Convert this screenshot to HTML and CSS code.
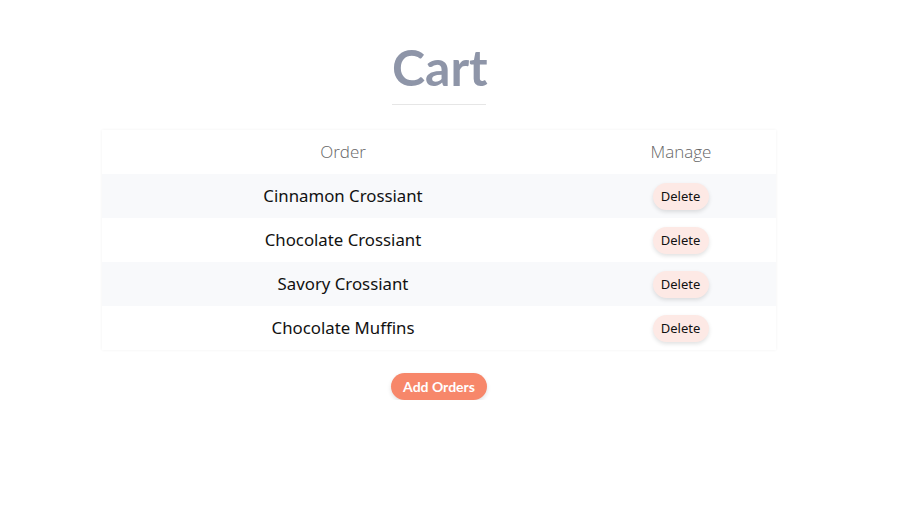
FILE: index.html
```html
<!DOCTYPE html>
<html>
<head>
<meta charset="utf-8">
<link rel="stylesheet" href="styles.css">
</head>
<body>
<main class="page">
  <h1 class="title">Cart</h1>
  <div class="card">
    <div class="row head">
      <div class="c-order">Order</div>
      <div class="c-manage">Manage</div>
    </div>
    <div class="row alt">
      <div class="c-order">Cinnamon Crossiant</div>
      <div class="c-manage"><button class="del">Delete</button></div>
    </div>
    <div class="row">
      <div class="c-order">Chocolate Crossiant</div>
      <div class="c-manage"><button class="del">Delete</button></div>
    </div>
    <div class="row alt">
      <div class="c-order">Savory Crossiant</div>
      <div class="c-manage"><button class="del">Delete</button></div>
    </div>
    <div class="row">
      <div class="c-order">Chocolate Muffins</div>
      <div class="c-manage"><button class="del">Delete</button></div>
    </div>
  </div>
  <button class="add">Add Orders</button>
</main>
</body>
</html>
```
FILE: styles.css
```css
* { box-sizing: border-box; }
html, body { margin: 0; padding: 0; background: #fff; }
body { font-family: "Noto Sans", "Open Sans", sans-serif; color: #111; }
.page {
  width: 878px;
  display: flex;
  flex-direction: column;
  align-items: center;
  padding-top: 36px;
}
.title {
  margin: 0;
  font-family: "Lato", "Noto Sans", sans-serif;
  font-weight: 700;
  font-size: 50px;
  line-height: 62px;
  color: #8e95a8;
  padding-bottom: 6px;
  border-bottom: 1px solid #e6e6e6;
  width: 94px;
  text-align: center;
}
.card {
  margin-top: 25px;
  width: 674px;
  box-shadow: 0 0 3px rgba(0,0,0,0.06);
}
.row {
  display: flex;
  height: 44px;
  align-items: center;
  font-size: 16.8px;
  padding-bottom: 2px;
}
.row.alt { background: #f8f9fb; }
.c-order { width: 482px; text-align: center; }
.c-manage { flex: 1; text-align: center; display: flex; justify-content: center; }
.head { font-weight: 300; color: #666; font-size: 17px; font-family: "Open Sans", "Noto Sans", sans-serif; }
.head .c-manage { margin-left: 2px; }
.del {
  font-family: "Noto Sans", sans-serif;
  font-size: 13px;
  height: 27px;
  width: 56px;
  border: none;
  border-radius: 14px;
  background: #fde9e5;
  color: #111;
  box-shadow: 0 2px 4px rgba(0,0,0,0.12);
  padding: 0;
  margin-left: 1px;
  margin-top: 2px;
}
.add {
  margin-top: 23px;
  font-family: "Lato", "Noto Sans", sans-serif;
  font-weight: 700;
  font-size: 14px;
  height: 27px;
  width: 96px;
  border: none;
  border-radius: 14px;
  background: #f7876a;
  color: #fff;
  box-shadow: 0 2px 4px rgba(0,0,0,0.12);
  padding: 0;
}
```
